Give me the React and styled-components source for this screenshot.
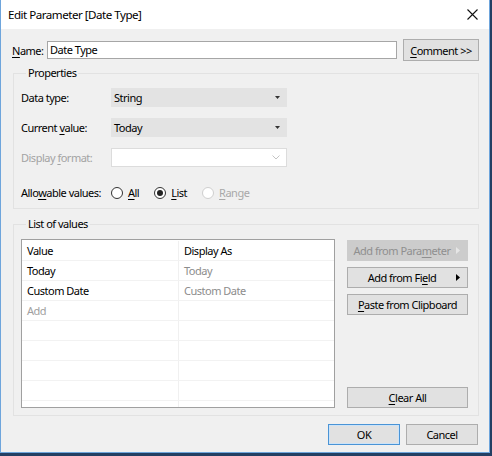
import React from "react";
import styled, { createGlobalStyle } from "styled-components";

const GlobalStyle = createGlobalStyle`
  html, body {
    margin: 0;
    padding: 0;
  }
  body {
    background: #233f63;
    font-family: "Segoe UI", "Noto Sans", "Open Sans", sans-serif;
    font-size: 11px;
    letter-spacing: -0.5px;
    color: #000;
    white-space: nowrap;
  }
`;

const Window = styled.div`
  width: 488px;
  height: 452px;
  border: 1px solid #6ea5dc;
  border-top: none;
  background: #f0f0f0;
  display: flex;
  flex-direction: column;
`;

const TitleBar = styled.div`
  height: 29px;
  background: #fff;
  display: flex;
  align-items: center;
  padding-left: 7px;
  flex: none;
`;

const Title = styled.div`
  flex: 1;
  font-size: 11.6px;
`;

const CloseBox = styled.div`
  width: 34px;
  height: 29px;
  display: flex;
  align-items: center;
  justify-content: center;
`;

const Body = styled.div`
  flex: 1;
  padding: 0 11px;
  display: flex;
  flex-direction: column;
`;

const NameRow = styled.div`
  margin-top: 10px;
  height: 22px;
  display: flex;
  align-items: center;
`;

const NameLabel = styled.label`
  width: 35px;
  flex: none;
`;

const TextInput = styled.div`
  width: 346px;
  height: 16px;
  border: 1px solid #a6a6a6;
  background: #fff;
  padding-left: 2px;
  line-height: 16px;
  box-sizing: content-box;
  flex: none;
`;

const Key = styled.span`
  text-decoration: underline;
  text-underline-offset: 2px;
`;

const Group = styled.fieldset`
  margin: ${(p) => p.$top}px -1px 0 1px;
  padding: 0 9px 0 7px;
  padding-bottom: ${(p) => p.$bottom}px;
  border: 1px solid #e2e2e2;
  min-width: 0;
`;

const Legend = styled.legend`
  margin-left: 5px;
  padding: 0 2px;
  line-height: 16px;
`;

const Fields = styled.div`
  display: flex;
  flex-direction: column;
  gap: 11px;
  padding-top: 7px;
`;

const FieldRow = styled.div`
  display: grid;
  grid-template-columns: 90px 176px;
  align-items: center;
  height: 19px;
  margin-top: ${(p) => p.$extra || 0}px;
  color: ${(p) => (p.$disabled ? "#a3a3a3" : "#000")};
`;

const Select = styled.div`
  height: 17px;
  border: 1px solid ${(p) => (p.$disabled ? "#dcdcdc" : "#e3e3e3")};
  background: ${(p) => (p.$disabled ? "#fff" : "#e3e3e3")};
  display: flex;
  align-items: center;
  padding: 0 6px 0 2px;
  color: #000;
`;

const SelectText = styled.span`
  flex: 1;
`;

const Radios = styled.div`
  display: flex;
  align-items: center;
  gap: 15px;
`;

const RadioItem = styled.label`
  display: flex;
  align-items: center;
  gap: 5px;
  color: ${(p) => (p.$disabled ? "#a8a8a8" : "#000")};
`;

const RadioCircle = styled.span`
  width: 10px;
  height: 10px;
  border-radius: 50%;
  border: 1px solid ${(p) => (p.$disabled ? "#cfcfcf" : "#333")};
  background: #fff;
  display: flex;
  align-items: center;
  justify-content: center;
  &::after {
    content: "";
    width: 6px;
    height: 6px;
    border-radius: 50%;
    background: ${(p) => (p.$checked ? "#222" : "transparent")};
  }
`;

const ListArea = styled.div`
  display: flex;
  padding-top: 7px;
`;

const Table = styled.div`
  width: 312px;
  height: 166px;
  border: 1px solid #a0a0a0;
  background: #fff;
  padding-top: 1px;
  box-sizing: content-box;
  overflow: hidden;
  flex: none;
`;

const Row = styled.div`
  display: grid;
  grid-template-columns: 156px 1fr;
  height: 19px;
  border-bottom: 1px solid #f2f2f2;
`;

const Cell = styled.div`
  padding-left: 5px;
  line-height: 19px;
  color: ${(p) => p.$color || "#000"};
  & + & {
    border-left: 1px solid #f0f0f0;
  }
`;

const SideButtons = styled.div`
  width: 121px;
  margin-left: 12px;
  padding-top: 1px;
  display: flex;
  flex-direction: column;
  gap: 6px;
`;

const Button = styled.button`
  height: ${(p) => p.$height || 21}px;
  width: ${(p) => (p.$width ? `${p.$width}px` : "auto")};
  margin-top: ${(p) => (p.$push ? "auto" : "0")};
  margin-left: ${(p) => p.$left || 0}px;
  border: 1px solid ${(p) => (p.$default ? "#4a94d6" : p.$disabled ? "#cccccc" : "#adadad")};
  box-shadow: ${(p) => (p.$default ? "inset 0 0 0 1px #cde3f7" : "none")};
  background: ${(p) => (p.$disabled ? "#cccccc" : "#e1e1e1")};
  color: ${(p) => (p.$disabled ? "#8f8f8f" : "#000")};
  font: inherit;
  letter-spacing: inherit;
  padding: 0 ${(p) => (p.$arrow ? "7px 0 0" : "4px")};
  display: flex;
  align-items: center;
  justify-content: center;
  box-sizing: border-box;
  flex: none;
`;

const ButtonText = styled.span`
  flex: 1;
  text-align: center;
`;

const Footer = styled.div`
  display: flex;
  justify-content: flex-end;
  gap: 6px;
  margin-top: 8px;
`;

const ArrowRight = ({ color }) => (
  <svg width="4" height="7" viewBox="0 0 4 7">
    <path d="M0 0 L4 3.5 L0 7 Z" fill={color} />
  </svg>
);

const ArrowDown = () => (
  <svg width="5" height="3" viewBox="0 0 5 3">
    <path d="M0 0 H5 L2.5 3 Z" fill="#333" />
  </svg>
);

const Chevron = () => (
  <svg width="8" height="5" viewBox="0 0 8 5">
    <path d="M0.5 0.5 L4 4 L7.5 0.5" fill="none" stroke="#c4c4c4" strokeWidth="1" />
  </svg>
);

const CloseIcon = () => (
  <svg width="11" height="11" viewBox="0 0 11 11">
    <path d="M0.5 0.5 L10.5 10.5 M10.5 0.5 L0.5 10.5" stroke="#111" strokeWidth="1.1" />
  </svg>
);

const values = [
  { value: "Today", display: "Today" },
  { value: "Custom Date", display: "Custom Date" },
];

export default function App() {
  const empty = Array.from({ length: 5 });
  return (
    <>
      <GlobalStyle />
      <Window>
        <TitleBar>
          <Title>Edit Parameter [Date Type]</Title>
          <CloseBox>
            <CloseIcon />
          </CloseBox>
        </TitleBar>
        <Body>
          <NameRow>
            <NameLabel>
              <Key>N</Key>ame:
            </NameLabel>
            <TextInput>Date Type</TextInput>
            <Button $width={76} $height={22} $left={6}>
              <ButtonText>
                <Key>C</Key>omment &gt;&gt;
              </ButtonText>
            </Button>
          </NameRow>

          <Group $top={4} $bottom={6}>
            <Legend>Properties</Legend>
            <Fields>
              <FieldRow>
                <span>Data type:</span>
                <Select>
                  <SelectText>String</SelectText>
                  <ArrowDown />
                </Select>
              </FieldRow>
              <FieldRow>
                <span>
                  Current <Key>v</Key>alue:
                </span>
                <Select>
                  <SelectText>Today</SelectText>
                  <ArrowDown />
                </Select>
              </FieldRow>
              <FieldRow $disabled>
                <span>
                  Display <Key>f</Key>ormat:
                </span>
                <Select $disabled>
                  <SelectText />
                  <Chevron />
                </Select>
              </FieldRow>
              <FieldRow $extra={5}>
                <span>
                  Allo<Key>w</Key>able values:
                </span>
                <Radios>
                  <RadioItem>
                    <RadioCircle />
                    <span>
                      <Key>A</Key>ll
                    </span>
                  </RadioItem>
                  <RadioItem>
                    <RadioCircle $checked />
                    <span>
                      <Key>L</Key>ist
                    </span>
                  </RadioItem>
                  <RadioItem $disabled>
                    <RadioCircle $disabled />
                    <span>
                      <Key>R</Key>ange
                    </span>
                  </RadioItem>
                </Radios>
              </FieldRow>
            </Fields>
          </Group>

          <Group $top={7} $bottom={7}>
            <Legend>List of values</Legend>
            <ListArea>
              <Table>
                <Row>
                  <Cell>Value</Cell>
                  <Cell>Display As</Cell>
                </Row>
                {values.map((v) => (
                  <Row key={v.value}>
                    <Cell>{v.value}</Cell>
                    <Cell $color="#8c8c8c">{v.display}</Cell>
                  </Row>
                ))}
                <Row>
                  <Cell $color="#a0a0a0">Add</Cell>
                  <Cell />
                </Row>
                {empty.map((_, i) => (
                  <Row key={i}>
                    <Cell />
                    <Cell />
                  </Row>
                ))}
              </Table>
              <SideButtons>
                <Button $disabled $arrow>
                  <ButtonText>
                    Add from Para<Key>m</Key>eter
                  </ButtonText>
                  <ArrowRight color="#e6e6e6" />
                </Button>
                <Button $arrow>
                  <ButtonText>
                    Add from Fi<Key>e</Key>ld
                  </ButtonText>
                  <ArrowRight color="#000" />
                </Button>
                <Button>
                  <ButtonText>
                    <Key>P</Key>aste from Clipboard
                  </ButtonText>
                </Button>
                <Button $push>
                  <ButtonText>
                    <Key>C</Key>lear All
                  </ButtonText>
                </Button>
              </SideButtons>
            </ListArea>
          </Group>

          <Footer>
            <Button $width={72} $default>
              <ButtonText>OK</ButtonText>
            </Button>
            <Button $width={72}>
              <ButtonText>Cancel</ButtonText>
            </Button>
          </Footer>
        </Body>
      </Window>
    </>
  );
}
